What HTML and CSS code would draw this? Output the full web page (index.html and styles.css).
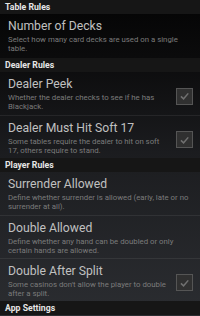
FILE: index.html
```html
<!DOCTYPE html>
<html>
<head>
<meta charset="utf-8">
<link rel="stylesheet" href="styles.css">
</head>
<body>
<div class="screen">
  <div class="header">Table Rules</div>
  <div class="item first">
    <div class="text">
      <div class="title">Number of Decks</div>
      <div class="summary">Select how many card decks are used on a single table.</div>
    </div>
  </div>
  <div class="header">Dealer Rules</div>
  <div class="item">
    <div class="text">
      <div class="title">Dealer Peek</div>
      <div class="summary">Whether the dealer checks to see if he has Blackjack.</div>
    </div>
    <div class="check"><svg viewBox="0 0 16 16" width="16" height="16"><path d="M4.2 8.4 L7 11 L12 5.2" fill="none" stroke="#707070" stroke-width="1.6"/></svg></div>
  </div>
  <div class="item divided">
    <div class="text">
      <div class="title">Dealer Must Hit Soft 17</div>
      <div class="summary">Some tables require the dealer to hit on soft 17, others require to stand.</div>
    </div>
    <div class="check"><svg viewBox="0 0 16 16" width="16" height="16"><path d="M4.2 8.4 L7 11 L12 5.2" fill="none" stroke="#707070" stroke-width="1.6"/></svg></div>
  </div>
  <div class="header">Player Rules</div>
  <div class="item">
    <div class="text">
      <div class="title">Surrender Allowed</div>
      <div class="summary">Define whether surrender is allowed (early, late or no surrender at all).</div>
    </div>
  </div>
  <div class="item divided">
    <div class="text">
      <div class="title">Double Allowed</div>
      <div class="summary">Define whether any hand can be doubled or only certain hands are allowed.</div>
    </div>
  </div>
  <div class="item divided">
    <div class="text">
      <div class="title">Double After Split</div>
      <div class="summary">Some casinos don't allow the player to double after a split.</div>
    </div>
    <div class="check"><svg viewBox="0 0 16 16" width="16" height="16"><path d="M4.2 8.4 L7 11 L12 5.2" fill="none" stroke="#707070" stroke-width="1.6"/></svg></div>
  </div>
  <div class="header">App Settings</div>
</div>
</body>
</html>
```
FILE: styles.css
```css
html, body {
  margin: 0;
  padding: 0;
}
body {
  width: 200px;
  height: 316px;
  overflow: hidden;
  background: linear-gradient(to bottom, #040404 0%, #0c0c0d 20%, #1c1d20 50%, #2b2d31 100%);
  font-family: Roboto, "Noto Sans", sans-serif;
}
.screen {
  display: flex;
  flex-direction: column;
}
.header {
  height: 14px;
  line-height: 14px;
  padding-left: 5px;
  background: #161616;
  color: #e6e6e6;
  font-size: 8.7px;
  font-weight: bold;
}
.item {
  height: 43px;
  box-sizing: border-box;
  padding: 5px 7px 0 8px;
  display: flex;
  align-items: center;
}
.item.first {
  height: 44px;
  padding-right: 14px;
}
.item.divided {
  border-top: 1px solid rgba(255,255,255,0.07);
}
.text {
  flex: 1;
  align-self: flex-start;
}
.title {
  color: #c0c0c0;
  font-size: 12.2px;
  line-height: 15px;
  white-space: nowrap;
}
.summary {
  color: #7b7b7b;
  font-size: 7.8px;
  line-height: 9px;
  margin-top: 1px;
}
.check {
  width: 15px;
  height: 15px;
  border: 1px solid #555;
  background: #303030;
  display: flex;
  align-items: center;
  justify-content: center;
  margin-left: 6px;
}
```
